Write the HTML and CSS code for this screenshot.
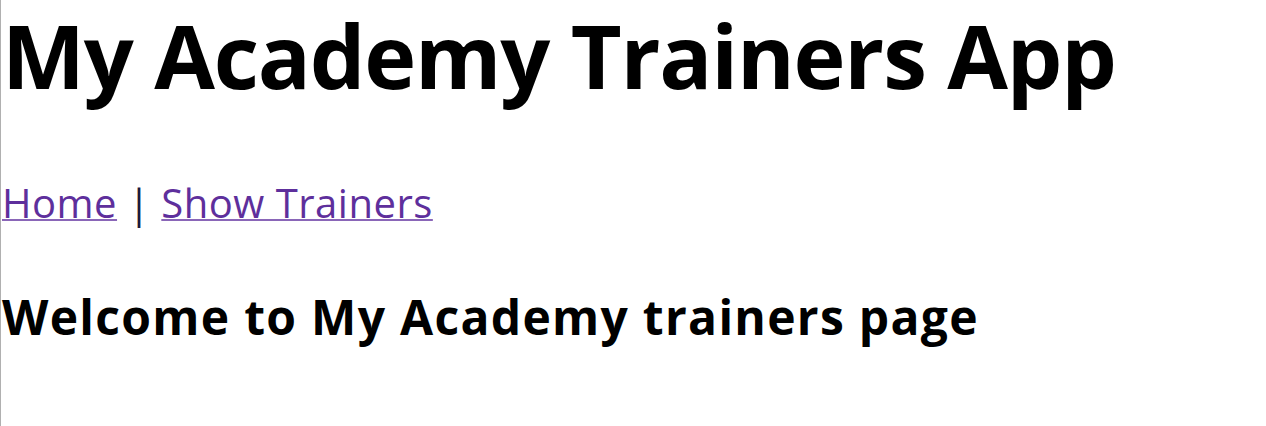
FILE: index.html
```html
<!DOCTYPE html>
<html lang="en">
<head>
<meta charset="utf-8">
<title>My Academy Trainers App</title>
<link rel="stylesheet" href="styles.css">
</head>
<body>
<div class="page">
  <h1 class="title">My Academy Trainers App</h1>
  <p class="nav"><a class="link" href="#home">Home</a> | <a class="link" href="#trainers">Show Trainers</a></p>
  <h3 class="welcome">Welcome to My Academy trainers page</h3>
</div>
</body>
</html>
```

FILE: styles.css
```css
html, body {
  margin: 0;
  padding: 0;
  background: #ffffff;
}
.page {
  min-height: 426px;
  border-left: 1px solid #b0b0b0;
  padding-left: 1px;
  font-family: "Open Sans", "Noto Sans", sans-serif;
  color: #000;
  box-sizing: border-box;
}
.title {
  margin: 0;
  font-size: 88px;
  line-height: 110px;
  font-weight: 700;
  letter-spacing: -1.2px;
  white-space: nowrap;
}
.nav {
  margin: 68px 0 0 0;
  font-size: 40px;
  line-height: 50px;
  letter-spacing: 0.5px;
  color: #1a1a3a;
}
.link {
  color: #5e2f9c;
  text-decoration: underline;
  text-decoration-thickness: 2px;
  text-decoration-color: #8a66b8;
}
.welcome {
  margin: 61px 0 0 0;
  font-size: 48px;
  line-height: 56px;
  font-weight: 700;
  letter-spacing: 1.3px;
}
```
